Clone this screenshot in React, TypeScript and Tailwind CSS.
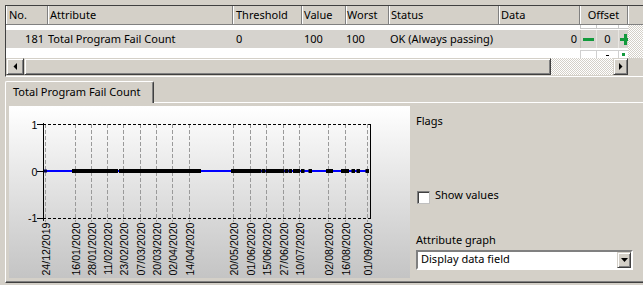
import React from "react";

const RAISED =
  "bg-[#d4d0c8] border border-t-[#d4d0c8] border-l-[#d4d0c8] border-r-[#404040] border-b-[#404040] shadow-[inset_1px_1px_0_#ffffff,inset_-1px_-1px_0_#808080]";
const HATCH =
  "bg-[repeating-conic-gradient(#d4d0c8_0%_25%,#ffffff_0%_50%)] bg-size-[2px_2px]";

const COLS = [
  { label: "No.", w: "w-[42px]", p: "pl-[3px]" },
  { label: "Attribute", w: "w-[185px]", p: "pl-[2px]" },
  { label: "Threshold", w: "w-[69px]", p: "pl-[3px]" },
  { label: "Value", w: "w-[44px]", p: "pl-[2px]" },
  { label: "Worst", w: "w-[43px]", p: "pl-[1px]" },
  { label: "Status", w: "w-[110px]", p: "pl-[2px]" },
  { label: "Data", w: "w-[81px]", p: "pl-[2px]" },
  { label: "Offset", w: "w-[48px]", p: "text-center" },
];

const LINES = [36, 66, 82, 98, 114, 131, 147, 163, 180, 224, 241, 257, 274, 290, 319, 336, 358];
const LABELS = [
  "24/12/2019",
  "16/01/2020",
  "28/01/2020",
  "11/02/2020",
  "23/02/2020",
  "07/03/2020",
  "20/03/2020",
  "02/04/2020",
  "14/04/2020",
  "20/05/2020",
  "01/06/2020",
  "15/06/2020",
  "27/06/2020",
  "10/07/2020",
  "02/08/2020",
  "16/08/2020",
  "01/09/2020",
];
const BANDS: [number, number][] = [
  [64, 79],
  [80, 108],
  [111, 191],
  [223, 251],
  [260, 274],
  [285, 290],
  [318, 323],
  [333, 339],
];
const SINGLES = [254, 258, 277, 281, 293.5, 301, 344, 349, 358];

function Chart() {
  const font = "'Liberation Sans', Arial, sans-serif";
  return (
    <svg width={401} height={172} className="block">
      {/* vertical grid */}
      {LINES.map((x, i) => (
        <line
          key={i}
          x1={x + 0.5}
          x2={x + 0.5}
          y1={18}
          y2={116}
          stroke="#9a9a9a"
          strokeWidth={1}
          strokeDasharray="4 2"
        />
      ))}
      {/* frame */}
      <line x1={34} x2={362} y1={18.5} y2={18.5} stroke="#000" strokeDasharray="3 2" />
      <line x1={34} x2={362} y1={112.5} y2={112.5} stroke="#000" strokeDasharray="3 2" />
      <line x1={361.5} x2={361.5} y1={18} y2={113} stroke="#000" />
      <line x1={34.5} x2={34.5} y1={17} y2={115} stroke="#000" />
      {[18.5, 65.5, 112.5].map((y) => (
        <line key={y} x1={28} x2={34} y1={y} y2={y} stroke="#000" />
      ))}
      {[
        ["1", 18.5],
        ["0", 65.5],
        ["-1", 111.5],
      ].map(([t, y]) => (
        <text
          key={t as string}
          x={28.5}
          y={y as number}
          textAnchor="end"
          dominantBaseline="central"
          fontSize={10.6}
          fontFamily={font}
          fill="#000"
        >
          {t}
        </text>
      ))}
      {/* data line */}
      <line x1={36} x2={358} y1={65} y2={65} stroke="#0000ff" strokeWidth={2} />
      <rect x={35} y={63.5} width={3} height={3} fill="#000050" />
      {BANDS.map(([a, b], i) => (
        <rect key={i} x={a - 1} y={63} width={b - a + 2} height={4} fill="#000" />
      ))}
      {SINGLES.map((x, i) => (
        <rect key={i} x={x - 1.5} y={63} width={3.5} height={4} fill="#000" />
      ))}
      {/* date labels */}
      {LINES.map((x, i) => (
        <text
          key={i}
          transform={`translate(${x + 0.5} 116.5) rotate(-90)`}
          textAnchor="end"
          dominantBaseline="central"
          fontSize={10.6}
          fontFamily={font}
          fill="#000"
        >
          {LABELS[i]}
        </text>
      ))}
    </svg>
  );
}

function Spinner() {
  return (
    <div className="w-[48px] shrink-0 h-full flex overflow-hidden">
      <div className="w-[16px] shrink-0 h-full flex items-center justify-center border-l border-[#c4c1ba]">
        <div className="w-[11px] h-[3px] bg-[#129a3c]" />
      </div>
      <div className="w-[22px] shrink-0 h-full border-l border-[#e8e6e2] text-center">0</div>
      <div className="w-[13px] shrink-0 h-full border-l border-[#e8e6e2] relative flex items-center justify-center">
        <div className="relative w-[11px] h-[11px]">
          <div className="absolute left-0 top-[4px] w-[11px] h-[3px] bg-[#129a3c]" />
          <div className="absolute left-[4px] top-0 w-[3px] h-[11px] bg-[#129a3c]" />
        </div>
      </div>
    </div>
  );
}

export default function App() {
  return (
    <div className="w-[643px] h-[285px] overflow-hidden bg-[#d4d0c8] text-[11px] text-black font-['Noto_Sans',sans-serif] flex flex-col">
      {/* table */}
      <div className="mt-[5px] ml-[5px] w-[640px] h-[72px] shrink-0 flex flex-col border-t border-l border-t-[#404040] border-l-[#404040] border-b border-b-white overflow-hidden">
        <div className="h-[19px] shrink-0 flex border-b border-b-[#808080] leading-[18px]">
          {COLS.map((c) => (
            <div
              key={c.label}
              className={`${c.w} ${c.p} shrink-0 h-full border-r border-r-[#808080] shadow-[inset_1px_0_0_#ffffff] whitespace-nowrap overflow-hidden`}
            >
              {c.label}
            </div>
          ))}
          <div className="flex-1 h-full shadow-[inset_1px_0_0_#ffffff]" />
        </div>
        <div className="h-[50px] shrink-0 flex">
          <div className="w-[622px] shrink-0 flex flex-col">
            <div className="h-[33px] flex flex-col bg-white">
              <div className="h-[5px] flex">
                <div className="w-[574px] shrink-0" />
                <div className="w-[48px] h-[4px] flex border-b border-[#c8c8c8]">
                  <div className="w-[16px] border-l border-[#c8c8c8]" />
                  <div className="w-[22px] border-l border-[#c8c8c8]" />
                  <div className="w-[10px] border-l border-[#c8c8c8]" />
                </div>
              </div>
              <div className="h-[18px] flex bg-[#d6d3ce] leading-[18px] whitespace-nowrap">
                <div className="w-[42px] shrink-0 text-right pr-[4px]">181</div>
                <div className="w-[185px] shrink-0">Total Program Fail Count</div>
                <div className="w-[69px] shrink-0 pl-[3px]">0</div>
                <div className="w-[44px] shrink-0 pl-[2px]">100</div>
                <div className="w-[43px] shrink-0">100</div>
                <div className="w-[110px] shrink-0 pl-[1px]">OK (Always passing)</div>
                <div className="w-[81px] shrink-0 text-right pr-[3px]">0</div>
                <Spinner />
              </div>
              <div className="h-[10px] flex">
                <div className="w-[574px] shrink-0" />
                <div className="w-[48px] mt-[2px] h-[8px] flex border-t border-[#d0d0d0]">
                  <div className="w-[16px] border-l border-[#d0d0d0]" />
                  <div className="w-[22px] border-l border-[#d0d0d0] flex justify-center pt-[4px]">
                    <div className="w-[3px] h-[1px] bg-black" />
                  </div>
                  <div className="w-[10px] border-l border-[#d0d0d0] flex justify-center pt-[2px]">
                    <div className="w-[3px] h-[3px] bg-[#129a3c]" />
                  </div>
                </div>
              </div>
            </div>
            <div className="h-[17px] flex">
              <div className={`${RAISED} w-[18px] h-full flex items-center justify-center`}>
                <svg width="4" height="7" viewBox="0 0 4 7">
                  <polygon points="4,0 4,7 0.5,3.5" fill="#000" />
                </svg>
              </div>
              <div className={`${RAISED} w-[527px] h-full`} />
              <div className={`${HATCH} w-[62px] h-full`} />
              <div className={`${RAISED} w-[15px] h-full flex items-center justify-center`}>
                <svg width="4" height="7" viewBox="0 0 4 7">
                  <polygon points="0,0 0,7 3.5,3.5" fill="#000" />
                </svg>
              </div>
            </div>
          </div>
          <div className="flex-1 flex flex-col">
            <div className={`${HATCH} h-[33px]`} />
            <div className="h-[17px]" />
          </div>
        </div>
      </div>

      {/* tab */}
      <div className="mt-[4px] ml-[5px] w-[149px] h-[22px] shrink-0 -mb-px relative z-10 bg-[#d4d0c8] border-t border-l border-r border-t-white border-l-white border-r-[#404040] shadow-[inset_-1px_0_0_#808080] rounded-t-[2px] pl-[7px] leading-[19px] whitespace-nowrap">
        Total Program Fail Count
      </div>

      {/* panel */}
      <div className="ml-[5px] w-[700px] h-[181px] shrink-0 flex border-t border-l border-t-white border-l-white border-b border-b-[#404040] shadow-[inset_0_-1px_0_#808080]">
        <div className="mt-[3px] ml-[3px] w-[401px] h-[172px] shrink-0 bg-linear-to-b from-white to-[#c4c4c4]">
          <Chart />
        </div>
        <div className="pl-[6px] pt-[10px] flex flex-col">
          <div className="h-[15px] leading-[15px]">Flags</div>
          <div className="mt-[63px] h-[13px] flex items-start">
            <div className="ml-[1px] w-[13px] h-[13px] bg-white border border-t-[#808080] border-l-[#808080] border-r-[#c0c0c0] border-b-[#c0c0c0] shadow-[inset_1px_1px_0_#404040]" />
            <span className="ml-[5px] -mt-[4px] leading-[15px] whitespace-nowrap">Show values</span>
          </div>
          <div className="mt-[28px] h-[15px] leading-[15px] whitespace-nowrap">Attribute graph</div>
          <div className="mt-[3px] w-[217px] h-[20px] flex bg-white border-2 border-t-[#808080] border-l-[#808080] border-r-white border-b-white">
            <div className="flex-1 pl-[3px] leading-[14px] whitespace-nowrap">Display data field</div>
            <div className={`${RAISED} w-[14px] h-full flex items-center justify-center`}>
              <svg width="7" height="4" viewBox="0 0 7 4">
                <polygon points="0,0 7,0 3.5,4" fill="#000" />
              </svg>
            </div>
          </div>
        </div>
      </div>
    </div>
  );
}
